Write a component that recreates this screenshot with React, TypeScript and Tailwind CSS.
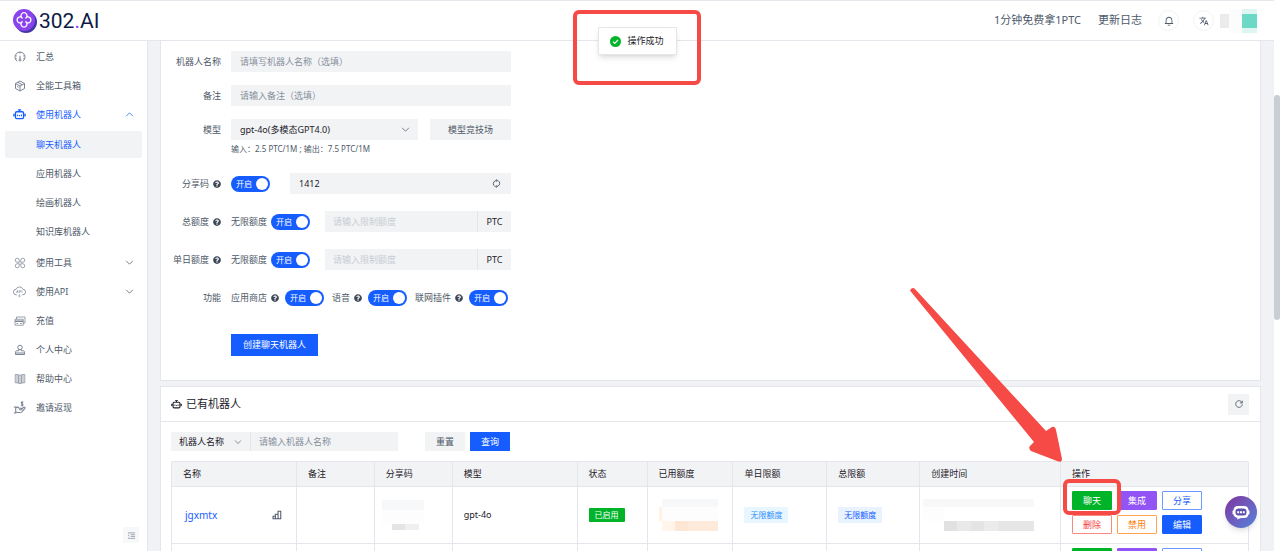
import type { ReactNode, SVGProps } from 'react';
import { FaQuestionCircle } from 'react-icons/fa';
import { MdTranslate } from 'react-icons/md';
import { RiNotification3Line } from 'react-icons/ri';

type IconProps = SVGProps<SVGSVGElement>;

function Icon({ children, className = 'size-3', strokeWidth = 4, ...rest }: IconProps) {
  return (
    <svg
      viewBox="0 0 48 48"
      fill="none"
      stroke="currentColor"
      strokeWidth={strokeWidth}
      aria-hidden="true"
      className={`shrink-0 ${className}`}
      {...rest}
    >
      {children}
    </svg>
  );
}

const GaugeIcon = () => (
  <Icon strokeWidth={4}>
    <path d="M13 41A20 20 0 1 1 35 41" />
    <path d="M24 19v13M24 4v6M6 18l5 2M42 18l-5 2M5 31h6M37 31h6" />
    <circle cx="24" cy="36" r="4" />
  </Icon>
);
const BoxIcon = () => (
  <Icon strokeWidth={4}>
    <path d="M24 4 42 14v20L24 44 6 34V14zM6 14l18 10 18-10M24 24v20M15 9l18 10M12 25l6 4" />
  </Icon>
);
const RobotIcon = ({ className = 'size-3' }: { className?: string }) => (
  <Icon className={className}>
    <rect x="9" y="14" width="30" height="25" rx="5" strokeWidth={5} />
    <path d="M24 14V7M18 7h12M3 21v10M45 21v10M3 26h6M39 26h6" />
    <path d="M17 24v6M24 26v4M31 24v6" />
  </Icon>
);
const ToolsIcon = () => (
  <Icon strokeWidth={3}>
    <path d="M21 21h-8a8 8 0 1 1 8-8zM27 21h8a8 8 0 1 0-8-8zM21 27h-8a8 8 0 1 0 8 8zM27 27h8a8 8 0 1 1-8 8z" />
  </Icon>
);
const CloudApiIcon = () => (
  <Icon strokeWidth={3} className="size-[13px]">
    <path d="M14 36h-2A10 10 0 0 1 11 16 14 14 0 0 1 37 16a10 10 0 0 1-1 20h-2" />
    <path d="M13 29l3-9 3 9M14 26h4M23 29v-9h3a3 3 0 0 1 0 6h-3M33 20v9M24 33v10M19 39l5 5 5-5" strokeWidth={2} />
  </Icon>
);
const CardIcon = () => (
  <Icon strokeWidth={3}>
    <path d="M4 17h33v24H4zM10 17V8h34v24h-7" />
    <path d="M4 25h33" strokeWidth={6} />
    <path d="M9 34h8M24 34h8" />
  </Icon>
);
const UserIcon = () => (
  <Icon strokeWidth={4}>
    <circle cx="24" cy="14" r="9" />
    <path d="M19 22v5H12c-4 0-6 2-6 6v3h36v-3c0-4-2-6-6-6h-7v-5M6 36v6h36v-6" />
  </Icon>
);
const BookIcon = () => (
  <Icon strokeWidth={3}>
    <path d="M24 10c-4-3-10-4-19-4v33c9 0 15 1 19 4 4-3 10-4 19-4V6c-9 0-15 1-19 4zv33M12 7v32M18 9v31M30 9v31M36 7v32" />
  </Icon>
);
const RewardIcon = () => (
  <Icon strokeWidth={4} className="size-[13px]">
    <path d="M3 22h7v22H3M10 25c6-4 10-2 13 2h8c3 0 3 5 0 5h-9M31 30l9-7c3-2 6 1 4 4L32 41c-5 3-14 1-22 0" />
    <path d="M38 5c-6-3-10 2-5 5 6 2 5 8-4 6M34 1v19" />
  </Icon>
);
const Chevron = ({ up = false, className = 'size-[9px]' }: { up?: boolean; className?: string }) => (
  <Icon className={className}>
    <path d={up ? 'M42 33 24 15 6 33' : 'M42 15 24 33 6 15'} />
  </Icon>
);
const RefreshIcon = () => (
  <Icon className="size-[10px]">
    <path d="M38.8 18A16 16 0 1 0 40 25M40 8v11H29" />
  </Icon>
);
const SyncIcon = () => (
  <Icon className="size-[9px]" strokeWidth={5}>
    <path d="M9 33a17 17 0 0 1 15-25M39 15a17 17 0 0 1-15 25" />
    <path d="M9 33a17 17 0 0 0 5 5M39 15a17 17 0 0 0-5-5" />
    <path d="M24 2v12l7-6zM24 46V34l-7 6z" strokeWidth={2} fill="currentColor" />
  </Icon>
);
const BarsIcon = () => (
  <Icon className="size-[10px]" strokeWidth={5}>
    <path d="M5 30h11v12H5zM16 20h13v22H16zM29 6h13v36H29z" />
  </Icon>
);

const navText = 'flex h-[27px] w-full items-center rounded-xs pl-[31px]';

function NavItem({ icon, label, open, active = false }: { icon: ReactNode; label: string; open?: boolean; active?: boolean }) {
  return (
    <a
      href="#"
      className={`flex h-[27px] items-center pl-2 pr-2 ${active ? 'text-[#165dff]' : 'text-[#4e5969]'}`}
    >
      <span className={`flex w-[13px] justify-center ${active ? '' : 'text-[#7b8494]'}`}>{icon}</span>
      <span className="ml-[10px] flex-1">{label}</span>
      {open !== undefined && <Chevron up={open} />}
    </a>
  );
}

function Sidebar() {
  return (
    <aside className="flex w-[148px] shrink-0 flex-col border-r border-[#e5e6eb] bg-white px-[5px] pt-[2px] pb-2 text-[9px]">
      <nav className="flex flex-1 flex-col gap-0.5">
        <NavItem icon={<GaugeIcon />} label="汇总" />
        <NavItem icon={<BoxIcon />} label="全能工具箱" />
        <NavItem icon={<RobotIcon className="size-[13px]" />} label="使用机器人" open active />
        <div className="flex flex-col gap-0.5 pt-px pb-0.5 text-[#4e5969]">
          <a href="#" className={`${navText} bg-[#f2f3f5] text-[#165dff]`}>聊天机器人</a>
          <a href="#" className={navText}>应用机器人</a>
          <a href="#" className={navText}>绘画机器人</a>
          <a href="#" className={navText}>知识库机器人</a>
        </div>
        <NavItem icon={<ToolsIcon />} label="使用工具" open={false} />
        <NavItem icon={<CloudApiIcon />} label="使用API" open={false} />
        <NavItem icon={<CardIcon />} label="充值" />
        <NavItem icon={<UserIcon />} label="个人中心" />
        <NavItem icon={<BookIcon />} label="帮助中心" />
        <NavItem icon={<RewardIcon />} label="邀请返现" />
      </nav>
      <button type="button" aria-label="收起菜单" className="mr-[3px] flex size-4 items-center justify-center self-end bg-[#f7f8fa] text-[#86909c]">
        <Icon className="size-[9px]">
          <path d="M5 10h38M20 20h23M20 29h23M5 39h38M12 19l-6 5 6 5" />
        </Icon>
      </button>
    </aside>
  );
}

function Logo() {
  return (
    <a href="#" className="flex items-center gap-[2px]" aria-label="302.AI">
      <svg viewBox="0 0 24 24" className="size-6" aria-hidden="true">
        <circle cx="13" cy="13" r="11" fill="#4338a8" />
        <circle cx="11" cy="11" r="11" fill="#8b43ee" />
        <g fill="none" stroke="#fff" strokeWidth="1.3">
          <path d="M8.4 8.2a3 3 0 1 1 5.2 0 3 3 0 1 1 0 5.4 3 3 0 1 1-5.2 0 3 3 0 1 1 0-5.4z" />
          <path d="M8.4 8.2l1 1.2M13.6 8.2l-1 1.2M8.4 13.6l1-1.2M13.6 13.6l-1-1.2" />
        </g>
      </svg>
      <span className="font-['Roboto',sans-serif] text-[21px] leading-6 text-[#0c1b45]">
        302<span className="text-[#8b43ee]">.</span>AI
      </span>
    </a>
  );
}

const roundButton = 'flex size-[21px] items-center justify-center rounded-full border border-[#f2f3f5] text-[#4e5969]';

function Header() {
  return (
    <header className="flex h-[41px] shrink-0 items-center border-y border-[#e5e6eb] bg-white pl-[13px] pr-[17px]">
      <Logo />
      <div className="ml-auto flex items-center text-[11px] text-[#4e5969]">
        <a href="#">1分钟免费拿1PTC</a>
        <a href="#" className="ml-[17px]">更新日志</a>
        <button type="button" aria-label="通知" className={`${roundButton} ml-4`}>
          <RiNotification3Line className="size-[10px]" />
        </button>
        <button type="button" aria-label="语言" className={`${roundButton} ml-[14px]`}>
          <MdTranslate className="size-[10px]" />
        </button>
        <div className="ml-[6px] flex items-center">
          <span className="h-[14px] w-[9px] bg-[#ebebec]" />
          <span className="h-6 w-[13px] bg-[#fcfcfd]" />
          <span className="h-6 w-[15px] border-y-[5px] border-[#dff5f1] bg-[#6bd9c5]" />
        </div>
      </div>
    </header>
  );
}

function Switch({ label }: { label: string }) {
  return (
    <button
      type="button"
      role="switch"
      aria-checked="true"
      aria-label={label}
      className="flex h-4 w-[39px] shrink-0 items-center justify-between rounded-full bg-[#165dff] pl-[5px] pr-[2px] text-[8px] text-white"
    >
      开启
      <span className="size-3 rounded-full bg-white" />
    </button>
  );
}

const Help = () => <FaQuestionCircle className="ml-1 size-2 shrink-0 text-[#3d4757]" aria-hidden="true" />;

const field = 'h-[21px] bg-[#f2f3f5] px-[9px] text-[9px] placeholder:text-[#86909c] outline-none';

function FormRow({ label, htmlFor, help = false, children }: { label: string; htmlFor?: string; help?: boolean; children: ReactNode }) {
  return (
    <div className="grid grid-cols-[60px_280px] gap-[10px]">
      <label htmlFor={htmlFor} className="flex h-[21px] items-center justify-end whitespace-nowrap text-[#4e5969]">
        {label}
        {help && <Help />}
      </label>
      <div className="flex items-center">{children}</div>
    </div>
  );
}

function QuotaRow({ id, label }: { id: string; label: string }) {
  return (
    <FormRow label={label} htmlFor={id} help>
      <span className="mr-1 whitespace-nowrap">无限额度</span>
      <Switch label={`${label} 无限额度`} />
      <div className="ml-[15px] flex min-w-0 flex-1">
        <input id={id} disabled placeholder="请输入限制额度" className="h-[21px] min-w-0 flex-1 bg-[#f2f3f5] px-2 text-[9px] placeholder:text-[#c9cdd4]" />
        <span className="flex h-[21px] w-[34px] items-center justify-center border-l border-[#e5e6eb] bg-[#f2f3f5] text-[#1d2129]">PTC</span>
      </div>
    </FormRow>
  );
}

function CreateForm() {
  return (
    <section className="border border-t-0 border-[#e5e6eb] bg-white pt-[10px] pb-6">
      <form className="flex flex-col gap-[13px] text-[9px] text-[#4e5969]">
        <FormRow label="机器人名称" htmlFor="name">
          <input id="name" placeholder="请填写机器人名称（选填）" className={`${field} w-full`} />
        </FormRow>
        <FormRow label="备注" htmlFor="remark">
          <input id="remark" placeholder="请输入备注（选填）" className={`${field} w-full`} />
        </FormRow>
        <div className="flex flex-col">
          <FormRow label="模型" htmlFor="model">
            <div className="grid flex-1 grid-cols-[1fr]">
              <select id="model" className={`${field} col-start-1 row-start-1 w-full appearance-none text-[#1d2129]`}>
                <option>gpt-4o(多模态GPT4.0)</option>
              </select>
              <span className="pointer-events-none col-start-1 row-start-1 mr-2 self-center justify-self-end">
                <Chevron />
              </span>
            </div>
            <button type="button" className="ml-3 h-[21px] w-[81px] bg-[#f2f3f5]">模型竞技场</button>
          </FormRow>
          <p className="ml-[70px] pt-px text-[8px] leading-4">输入：2.5 PTC/1M ; 输出：7.5 PTC/1M</p>
        </div>
        <div className="flex flex-col gap-[17px] pt-[3px]">
          <FormRow label="分享码" htmlFor="code" help>
            <Switch label="分享码" />
            <div className="ml-5 flex flex-1 items-center bg-[#f2f3f5] pr-[10px]">
              <input id="code" defaultValue="1412" className={`${field} min-w-0 flex-1 text-[#1d2129]`} />
              <button type="button" aria-label="刷新分享码"><SyncIcon /></button>
            </div>
          </FormRow>
          <QuotaRow id="total" label="总额度" />
          <QuotaRow id="daily" label="单日额度" />
          <FormRow label="功能">
            <div className="flex flex-1 items-center gap-2 whitespace-nowrap">
              {['应用商店', '语音', '联网插件'].map((name) => (
                <div key={name} className="flex items-center">
                  <span>{name}</span>
                  <Help />
                  <span className="ml-[6px] flex"><Switch label={name} /></span>
                </div>
              ))}
            </div>
          </FormRow>
        </div>
        <button type="submit" className="mt-[13px] ml-[70px] h-[22px] w-[87px] bg-[#165dff] text-white">创建聊天机器人</button>
      </form>
    </section>
  );
}

const actionBase = 'h-[19px] w-10 rounded-[1px] border';

function Actions({ marked = false }: { marked?: boolean }) {
  return (
    <div className="flex w-[132px] flex-wrap gap-x-[5px] gap-y-[5px]">
      <div className="relative flex">
        <button type="button" className={`${actionBase} border-[#00b42a] bg-[#00b42a] text-white`}>聊天</button>
        {marked && <span className="pointer-events-none absolute -inset-x-[9px] -top-3 -bottom-[5px] z-10 rounded-md border-4 border-[#f54a45]" />}
      </div>
      <button type="button" className={`${actionBase} border-[#9254f5] bg-[#9254f5] text-white`}>集成</button>
      <button type="button" className={`${actionBase} border-[#6a9aff] bg-white text-[#165dff]`}>分享</button>
      <button type="button" className={`${actionBase} border-[#f98981] bg-white text-[#f53f3f]`}>删除</button>
      <button type="button" className={`${actionBase} border-[#ffa44d] bg-white text-[#ff7d00]`}>禁用</button>
      <button type="button" className={`${actionBase} border-[#165dff] bg-[#165dff] text-white`}>编辑</button>
    </div>
  );
}

const columns = [
  { title: '名称', width: 125 },
  { title: '备注', width: 78 },
  { title: '分享码', width: 78 },
  { title: '模型', width: 125 },
  { title: '状态', width: 70 },
  { title: '已用额度', width: 86 },
  { title: '单日限额', width: 94 },
  { title: '总限额', width: 93 },
  { title: '创建时间', width: 141 },
  { title: '操作', width: 188 },
];

const cell = 'border-r border-b border-[#e5e6eb] px-[11px]';
const actionCell = `${cell} pt-1 pb-[9px]`;

function BotTable() {
  return (
    <table className="w-full table-fixed border-separate border-spacing-0 rounded-t-xs border-t border-l border-[#e5e6eb] text-left text-[#1d2129]">
      <colgroup>
        {columns.map((c) => (
          <col key={c.title} style={{ width: `${c.width / 10.78}%` }} />
        ))}
      </colgroup>
      <thead>
        <tr>
          {columns.map((c) => (
            <th key={c.title} className="h-[25px] border-r border-b border-[#e5e6eb] bg-[#f2f3f5] px-[11px] font-normal">
              {c.title}
            </th>
          ))}
        </tr>
      </thead>
      <tbody>
        <tr>
          <td className={cell}>
            <div className="flex items-center justify-between pl-[2px] pr-[3px] text-[#4e5969]">
              <a href="#" className="text-[10px] text-[#165dff]">jgxmtx</a>
              <BarsIcon />
            </div>
          </td>
          <td className={cell} />
          <td className={cell}>
            <div className="-ml-1 flex w-[42px] flex-col">
              <span className="h-[10px] bg-[#f7f8f9]" />
              <span className="h-[14px] bg-[#fdfdfd]" />
              <span className="ml-[10px] flex h-[6px]">
                <span className="w-[13px] bg-[#e4e4e5]" />
                <span className="w-[14px] bg-[#efeff0]" />
              </span>
            </div>
          </td>
          <td className={cell}>gpt-4o</td>
          <td className={cell}>
            <span className="flex h-[14px] w-9 items-center justify-center rounded-[1px] bg-[#00b42a] text-[8px] text-white">已启用</span>
          </td>
          <td className={cell}>
            <div className="flex w-[59px] flex-col">
              <span className="ml-[3px] h-2 bg-[#f7f8fa]" />
              <span className="h-[14px] border-l-[3px] border-[#fff3e4] bg-[#fdfdfe]" />
              <span className="ml-[3px] flex h-[10px]">
                <span className="w-[13px] bg-[#fff5eb]" />
                <span className="w-[13px] bg-[#fde6d3]" />
                <span className="flex-1 bg-[#fdeadb]" />
              </span>
            </div>
          </td>
          <td className={cell}>
            <span className="flex h-4 w-11 items-center justify-center bg-[#e8f7ff] text-[8px] text-[#3491fa]">无限额度</span>
          </td>
          <td className={cell}>
            <span className="flex h-4 w-11 items-center justify-center bg-[#e8f3ff] text-[8px] text-[#165dff]">无限额度</span>
          </td>
          <td className={cell}>
            <div className="-ml-2 flex w-[111px] flex-col">
              <span className="h-2 bg-[#f8f8f9]" />
              <span className="h-[14px] w-[21px] bg-[#fdfdfd]" />
              <span className="ml-[21px] flex h-[10px]">
                <span className="w-[13px] bg-[#e1e1e2]" />
                <span className="w-[14px] bg-[#e9e9ea]" />
                <span className="w-[13px] bg-[#e4e4e5]" />
                <span className="w-[14px] bg-[#ebebec]" />
                <span className="flex-1 bg-[#e6e6e7]" />
              </span>
            </div>
          </td>
          <td className={actionCell}><Actions marked /></td>
        </tr>
        <tr>
          {columns.slice(1).map((c) => (
            <td key={c.title} className={cell} />
          ))}
          <td className={actionCell}><Actions /></td>
        </tr>
      </tbody>
    </table>
  );
}

function BotList() {
  return (
    <section className="mt-[5px] border border-[#e5e6eb] bg-white text-[9px]">
      <div className="flex h-[35px] items-center gap-1 border-b border-[#e5e6eb] pr-[11px] pl-[10px] text-[#1d2129]">
        <RobotIcon className="size-[11px]" />
        <h2 className="text-[11px]">已有机器人</h2>
        <button type="button" aria-label="刷新" className="ml-auto flex size-[21px] items-center justify-center bg-[#f2f3f5] text-[#4e5969]">
          <RefreshIcon />
        </button>
      </div>
      <div className="pt-[10px] pr-[11px] pl-[10px]">
        <div className="mb-[10px] flex items-center">
          <div className="grid w-20 border-r border-[#e5e6eb]">
            <select aria-label="搜索字段" className="col-start-1 row-start-1 h-[19px] w-full appearance-none bg-[#f2f3f5] pl-2 text-[#1d2129]">
              <option>机器人名称</option>
            </select>
            <span className="pointer-events-none col-start-1 row-start-1 mr-2 self-center justify-self-end text-[#4e5969]">
              <Chevron className="size-2" />
            </span>
          </div>
          <input aria-label="机器人名称" placeholder="请输入机器人名称" className="h-[19px] w-[147px] bg-[#f2f3f5] px-2 placeholder:text-[#86909c]" />
          <button type="button" className="ml-[27px] h-[19px] w-10 bg-[#f2f3f5] text-[#4e5969]">重置</button>
          <button type="button" className="ml-[5px] h-[19px] w-10 bg-[#165dff] text-white">查询</button>
        </div>
        <BotTable />
      </div>
    </section>
  );
}

function Toast() {
  return (
    <div className="pointer-events-none absolute top-[10px] left-1/2 z-20 flex h-[75px] w-32 -translate-x-1/2 items-start justify-center rounded-md border-4 border-[#f54a45] pt-[13px]">
      <div role="status" className="flex h-7 w-[79px] items-center justify-center gap-[6px] border border-[#e5e6eb] bg-white text-[9px] text-[#1d2129] shadow-md">
        <svg viewBox="0 0 12 12" className="size-[11px]" aria-hidden="true">
          <circle cx="6" cy="6" r="6" fill="#00b42a" />
          <path d="M3.2 6.1 5.2 8l3.6-3.7" fill="none" stroke="#fff" strokeWidth="1.3" />
        </svg>
        操作成功
      </div>
    </div>
  );
}

function Arrow() {
  return (
    <svg viewBox="0 0 154 176" className="pointer-events-none absolute top-[287px] right-[211px] z-20 w-[154px]" aria-hidden="true">
      <path
        d="M1 3.500Q3 0 5.500 1.500L137 144 143 140Q146 139 147 143L153 172Q153 176 148 174L122 164Q119 161 121 159L125 155Z"
        fill="#f54a45"
      />
    </svg>
  );
}

function ChatBubble() {
  return (
    <button
      type="button"
      aria-label="在线客服"
      className="absolute right-[17px] bottom-[23px] z-20 flex size-8 items-center justify-center rounded-full bg-linear-to-br from-[#7b2f9f] to-[#4a83dd] shadow-md"
    >
      <svg viewBox="0 0 18 18" className="size-[18px]" aria-hidden="true">
        <path d="M6 3h6c3 0 4 1.500 4.500 4l1 1v3l-1 .5C16 14 14.500 15 12 15H9l-4 1.500.5-1.700C3 14.500 2 13.500 1.500 11.500l-1-.5V8l1-1C2 4.500 3 3 6 3z" fill="#fff" />
        <rect x="3.500" y="5.500" width="11" height="7" rx="3" fill="#5f50b0" />
        <path d="M5.200 8.200h2v2h-2zM8 8.200h2v2H8zM10.800 8.200h2v2h-2z" fill="#fff" />
      </svg>
    </button>
  );
}

export default function App() {
  return (
    <div className="flex h-screen overflow-hidden bg-white font-['Noto_Sans','Noto_Sans_CJK_SC',sans-serif] leading-normal">
      <div className="relative flex min-w-0 flex-1 flex-col">
        <Header />
        <div className="flex min-h-0 flex-1">
          <Sidebar />
          <main className="min-w-0 flex-1 overflow-hidden bg-[#f0f2f5] pl-3 pr-[13px]">
            <CreateForm />
            <BotList />
          </main>
        </div>
        <Toast />
        <Arrow />
        <ChatBubble />
      </div>
      <div className="w-[6px] shrink-0 pt-[95px]">
        <div className="h-[225px] rounded-full bg-[#c9cdd4]" />
      </div>
    </div>
  );
}
